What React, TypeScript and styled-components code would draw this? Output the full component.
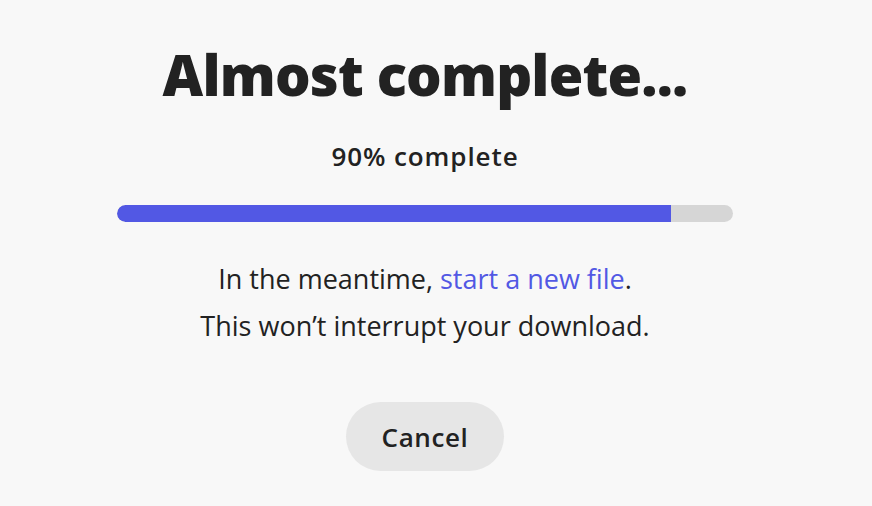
import React from "react";
import styled, { createGlobalStyle } from "styled-components";

const Global = createGlobalStyle`
  html, body { margin: 0; padding: 0; background: #f8f8f8; }
  body { font-family: "Open Sans", "Noto Sans", sans-serif; color: #222; }
`;

const Page = styled.main`
  width: 850px;
  height: 506px;
  display: flex;
  flex-direction: column;
  align-items: center;
  box-sizing: border-box;
  padding-top: 36px;
`;

const Title = styled.h1`
  margin: 0;
  font-size: 56px;
  font-weight: 800;
  line-height: 76px;
  letter-spacing: -0.8px;
  color: #222;
`;

const Status = styled.div`
  margin-top: 28px;
  font-size: 26px;
  font-weight: 600;
  line-height: 32px;
  letter-spacing: 0.9px;
`;

const Track = styled.div`
  margin-top: 33px;
  width: 616px;
  height: 17px;
  border-radius: 9px;
  background: #d6d6d6;
  overflow: hidden;
  display: flex;
`;

const Fill = styled.div`
  height: 100%;
  background: #5258e4;
  border-radius: 9px 0 0 9px;
`;

const Message = styled.p`
  margin: 33px 0 0;
  font-size: 27px;
  line-height: 47px;
  text-align: center;
`;

const Link = styled.a`
  color: #5258e4;
  text-decoration: none;
`;

const CancelButton = styled.button`
  margin-top: 53px;
  width: 158px;
  height: 69px;
  border: none;
  border-radius: 35px;
  background: #e6e6e6;
  font-family: inherit;
  font-size: 26px;
  font-weight: 600;
  letter-spacing: 0.6px;
  color: #222;
`;

export default function App() {
  const pct = 90;
  return (
    <>
      <Global />
      <Page>
        <Title>Almost complete...</Title>
        <Status>{pct}% complete</Status>
        <Track>
          <Fill style={{ width: `${pct}%` }} />
        </Track>
        <Message>
          In the meantime, <Link href="#">start a new file</Link>.
          <br />
          This won’t interrupt your download.
        </Message>
        <CancelButton>Cancel</CancelButton>
      </Page>
    </>
  );
}
